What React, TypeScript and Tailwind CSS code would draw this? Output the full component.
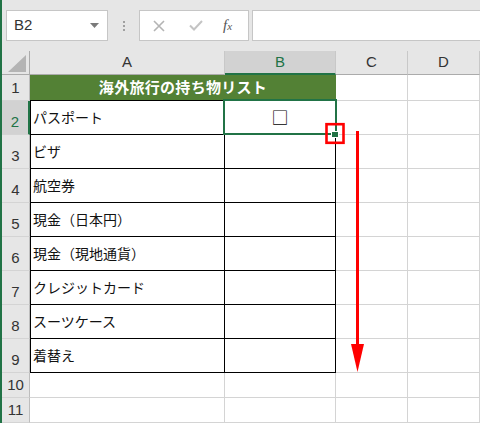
import React from "react";

const rows = [
  { n: 2, a: "パスポート", b: "□" },
  { n: 3, a: "ビザ", b: "" },
  { n: 4, a: "航空券", b: "" },
  { n: 5, a: "現金（日本円）", b: "" },
  { n: 6, a: "現金（現地通貨）", b: "" },
  { n: 7, a: "クレジットカード", b: "" },
  { n: 8, a: "スーツケース", b: "" },
  { n: 9, a: "着替え", b: "" },
];

const jp = { fontFamily: '"Noto Sans CJK JP", "Noto Sans", sans-serif' };
const latin = { fontFamily: '"Liberation Sans", Arial, sans-serif' };

function RowHead({ n, h, active }: { n: number; h: string; active?: boolean }) {
  return (
    <div
      style={latin}
      className={`${h} flex items-end justify-center pb-[3px] text-[15px] leading-[18px] border-b border-[#d4d4d4] ${
        active
          ? "bg-[#d2d2d2] text-[#217346] border-r-2 border-r-[#217346]"
          : "bg-[#e6e6e6] text-[#333] border-r border-r-[#bdbdbd]"
      }`}
    >
      {n}
    </div>
  );
}

export default function App() {
  return (
    <div className="relative w-[480px] h-[423px] overflow-hidden bg-white flex">
      {/* window edge */}
      <div className="w-[2px] h-full bg-[#217346]" />

      <div className="flex-1 flex flex-col">
        {/* Formula bar */}
        <div className="h-[51px] bg-[#e6e6e6] flex items-start pt-[10px]">
          <div className="ml-[4px] w-[102px] h-[31px] bg-white border border-[#c6c6c6] flex items-center justify-between pl-[7px] pr-[8px]">
            <span style={latin} className="text-[15px] text-[#333]">B2</span>
            <svg width="9" height="5" viewBox="0 0 9 5">
              <polygon points="0,0 9,0 4.5,5" fill="#7a7a7a" />
            </svg>
          </div>
          <div className="w-[31px] h-[31px] flex flex-col items-center justify-center gap-[2px]">
            <span className="w-[2px] h-[2px] bg-[#a0a0a0]" />
            <span className="w-[2px] h-[2px] bg-[#a0a0a0]" />
            <span className="w-[2px] h-[2px] bg-[#a0a0a0]" />
          </div>
          <div className="w-[110px] h-[31px] bg-white border border-[#c6c6c6] flex items-center pl-[12px]">
            <svg width="12" height="12" viewBox="0 0 12 12" className="ml-[1px]">
              <path d="M1 1 L11 11 M11 1 L1 11" stroke="#b4b4b4" strokeWidth="1.6" />
            </svg>
            <svg width="14" height="11" viewBox="0 0 14 11" className="ml-[24px]">
              <path d="M1 5.5 L5 9.5 L13 1" stroke="#c4c4c4" strokeWidth="2" fill="none" />
            </svg>
            <span
              style={{ fontFamily: '"Liberation Serif", serif' }}
              className="ml-[20px] italic text-[15px] text-[#555] leading-none"
            >
              f<span className="text-[11px]">x</span>
            </span>
          </div>
          <div className="ml-[3px] flex-1 h-[31px] bg-white border border-[#c6c6c6] border-r-0" />
        </div>

        {/* Sheet */}
        <div className="grid grid-cols-[28px_195px_111px_72px_72px]">
          {/* column headers */}
          <div className="h-[24px] bg-[#e6e6e6] border-r border-b border-[#ababab] flex items-end justify-end pr-[3px] pb-[2px]">
            <svg width="18" height="17" viewBox="0 0 18 17">
              <polygon points="18,0 18,17 0,17" fill="#b4b4b4" />
            </svg>
          </div>
          <div style={latin} className="h-[24px] bg-[#e6e6e6] border-r border-b border-r-[#c8c8c8] border-b-[#ababab] flex items-center justify-center text-[15px] text-[#333]">A</div>
          <div style={latin} className="h-[24px] bg-[#d2d2d2] border-r border-b-2 border-r-[#c8c8c8] border-b-[#217346] flex items-center justify-center text-[15px] text-[#217346]">B</div>
          <div style={latin} className="h-[24px] bg-[#e6e6e6] border-r border-b border-r-[#c8c8c8] border-b-[#ababab] flex items-center justify-center text-[15px] text-[#333]">C</div>
          <div style={latin} className="h-[24px] bg-[#e6e6e6] border-r border-b border-r-[#c8c8c8] border-b-[#ababab] flex items-center justify-center text-[15px] text-[#333]">D</div>

          {/* row 1 */}
          <RowHead n={1} h="h-[26px]" />
          <div
            style={jp}
            className="col-span-2 h-[26px] bg-[#538135] border-b border-b-black flex items-center justify-center text-[15px] font-bold text-white tracking-[0.3px]"
          >
            海外旅行の持ち物リスト
          </div>
          <div className="h-[26px] border-r border-b border-[#d4d4d4]" />
          <div className="h-[26px] border-r border-b border-[#d4d4d4]" />

          {/* rows 2-9 */}
          {rows.map((r) => (
            <React.Fragment key={r.n}>
              <RowHead n={r.n} h="h-[34px]" active={r.n === 2} />
              <div
                style={jp}
                className="h-[34px] border-l border-r border-b border-black flex items-center pl-[2px] text-[14px] text-[#111]"
              >
                {r.a}
              </div>
              <div
                style={jp}
                className="h-[34px] border-r border-b border-black flex items-center justify-center pb-[2px] text-[17px] text-black"
              >
                {r.b}
              </div>
              <div className="h-[34px] border-r border-b border-[#d4d4d4]" />
              <div className="h-[34px] border-r border-b border-[#d4d4d4]" />
            </React.Fragment>
          ))}

          {/* rows 10-11 */}
          {[10, 11].map((n) => (
            <React.Fragment key={n}>
              <RowHead n={n} h="h-[25px]" />
              <div className="h-[25px] border-r border-b border-[#d4d4d4]" />
              <div className="h-[25px] border-r border-b border-[#d4d4d4]" />
              <div className="h-[25px] border-r border-b border-[#d4d4d4]" />
              <div className="h-[25px] border-r border-b border-[#d4d4d4]" />
            </React.Fragment>
          ))}
        </div>
      </div>

      {/* selection, fill handle and annotations */}
      <svg className="absolute left-0 top-0 pointer-events-none" width="480" height="423" viewBox="0 0 480 423">
        <rect x="224" y="100" width="112" height="34" fill="none" stroke="#217346" strokeWidth="2" />
        <rect x="331.5" y="131.5" width="7" height="6" fill="#217346" stroke="#fff" strokeWidth="1" />
        <rect x="326.5" y="124.2" width="17" height="18.6" fill="none" stroke="#ff0000" strokeWidth="2.6" />
        <rect x="356" y="131" width="3" height="220" fill="#ff0000" />
        <polygon points="351,344 364,344 357.5,372" fill="#ff0000" />
      </svg>
    </div>
  );
}
